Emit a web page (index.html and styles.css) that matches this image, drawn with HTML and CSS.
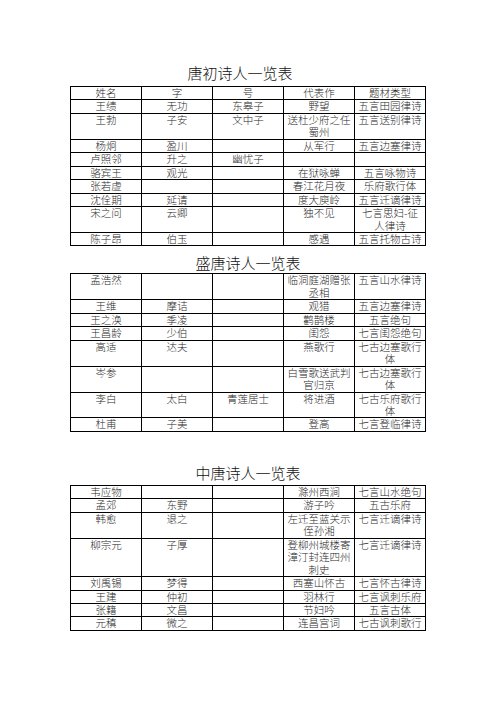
FILE: index.html
```html
<!DOCTYPE html>
<html lang="zh-CN">
<head>
<meta charset="utf-8">
<title>诗人一览表</title>
<link rel="stylesheet" href="styles.css">
</head>
<body>
<main class="page">
  <section class="sec sec-early">
    <h2 class="title title-early">唐初诗人一览表</h2>
    <table class="poets">
      <colgroup><col><col><col><col><col></colgroup>
      <tr><td>姓名</td><td>字</td><td>号</td><td>代表作</td><td>题材类型</td></tr>
      <tr><td>王绩</td><td>无功</td><td>东皋子</td><td>野望</td><td>五言田园律诗</td></tr>
      <tr><td>王勃</td><td>子安</td><td>文中子</td><td>送杜少府之任蜀州</td><td>五言送别律诗</td></tr>
      <tr><td>杨炯</td><td>盈川</td><td></td><td>从军行</td><td>五言边塞律诗</td></tr>
      <tr><td>卢照邻</td><td>升之</td><td>幽忧子</td><td></td><td></td></tr>
      <tr><td>骆宾王</td><td>观光</td><td></td><td>在狱咏蝉</td><td>五言咏物诗</td></tr>
      <tr><td>张若虚</td><td></td><td></td><td>春江花月夜</td><td>乐府歌行体</td></tr>
      <tr><td>沈佺期</td><td>延请</td><td></td><td>度大庾岭</td><td>五言迁谪律诗</td></tr>
      <tr><td>宋之问</td><td>云卿</td><td></td><td>独不见</td><td>七言思妇-征<br>人律诗</td></tr>
      <tr><td>陈子昂</td><td>伯玉</td><td></td><td>感遇</td><td>五言托物古诗</td></tr>
    </table>
  </section>

  <section class="sec sec-high">
    <h2 class="title">盛唐诗人一览表</h2>
    <table class="poets">
      <colgroup><col><col><col><col><col></colgroup>
      <tr><td>孟浩然</td><td></td><td></td><td>临洞庭湖赠张丞相</td><td>五言山水律诗</td></tr>
      <tr><td>王维</td><td>摩诘</td><td></td><td>观猎</td><td>五言边塞律诗</td></tr>
      <tr><td>王之涣</td><td>季凌</td><td></td><td>鹳鹊楼</td><td>五言绝句</td></tr>
      <tr><td>王昌龄</td><td>少伯</td><td></td><td>闺怨</td><td>七言闺怨绝句</td></tr>
      <tr><td>高适</td><td>达夫</td><td></td><td>燕歌行</td><td>七古边塞歌行体</td></tr>
      <tr><td>岑参</td><td></td><td></td><td>白雪歌送武判官归京</td><td>七古边塞歌行体</td></tr>
      <tr><td>李白</td><td>太白</td><td>青莲居士</td><td>将进酒</td><td>七古乐府歌行体</td></tr>
      <tr><td>杜甫</td><td>子美</td><td></td><td>登高</td><td>七言登临律诗</td></tr>
    </table>
  </section>

  <section class="sec sec-mid">
    <h2 class="title">中唐诗人一览表</h2>
    <table class="poets">
      <colgroup><col><col><col><col><col></colgroup>
      <tr><td>韦应物</td><td></td><td></td><td>滁州西涧</td><td>七言山水绝句</td></tr>
      <tr><td>孟郊</td><td>东野</td><td></td><td>游子吟</td><td>五古乐府</td></tr>
      <tr><td>韩愈</td><td>退之</td><td></td><td>左迁至蓝关示侄孙湘</td><td>七言迁谪律诗</td></tr>
      <tr><td>柳宗元</td><td>子厚</td><td></td><td>登柳州城楼寄漳汀封连四州刺史</td><td>七言迁谪律诗</td></tr>
      <tr><td>刘禹锡</td><td>梦得</td><td></td><td>西塞山怀古</td><td>七言怀古律诗</td></tr>
      <tr><td>王建</td><td>仲初</td><td></td><td>羽林行</td><td>七言讽刺乐府</td></tr>
      <tr><td>张籍</td><td>文昌</td><td></td><td>节妇吟</td><td>五言古体</td></tr>
      <tr><td>元稹</td><td>微之</td><td></td><td>连昌宫词</td><td>七古讽刺歌行</td></tr>
    </table>
  </section>
</main>
</body>
</html>
```

FILE: styles.css
```css
html, body {
  margin: 0;
  padding: 0;
  background: #ffffff;
}

body {
  font-family: "Noto Sans CJK SC", "Noto Sans", sans-serif;
  color: #1a1a1a;
}

.page {
  width: 356px;
  margin: 0 0 0 70px;
  padding-top: 63px;
}

.sec {
  display: flex;
  flex-direction: column;
}

.title {
  margin: 0;
  font-size: 15px;
  line-height: 20px;
  font-weight: 300;
  text-align: center;
  color: #111;
}

.title-early {
  padding-right: 16px;
  margin-bottom: 3px;
}

.sec-high .title {
  margin-top: 7px;
}

.sec-mid .title {
  margin-top: 31px;
  margin-bottom: 2px;
}

.poets {
  width: 356px;
  table-layout: fixed;
  border-collapse: collapse;
  border: 1px solid #000;
}

.poets col {
  width: 20%;
}

.poets td {
  border: 1px solid #000;
  padding: 0;
  font-size: 10.5px;
  line-height: 12.45px;
  font-weight: 300;
  text-align: center;
  vertical-align: top;
  color: #2a2a2a;
}
```
